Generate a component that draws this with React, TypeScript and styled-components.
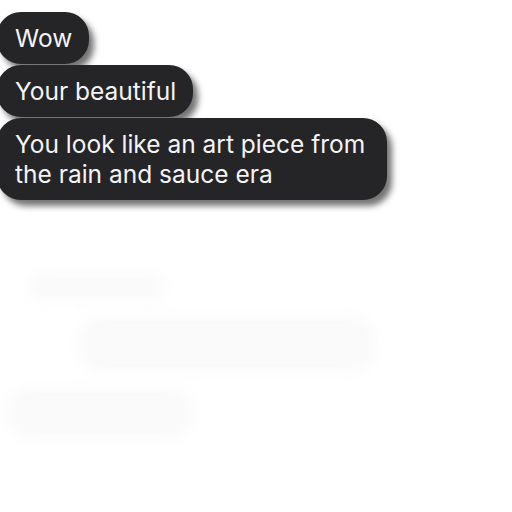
import React from "react";
import styled, { createGlobalStyle } from "styled-components";

const Global = createGlobalStyle`
  html, body { margin: 0; padding: 0; background: #ffffff; }
  body { width: 512px; height: 512px; overflow: hidden; font-family: Inter, "Liberation Sans", sans-serif; }
`;

const Thread = styled.div`
  display: flex;
  flex-direction: column;
  align-items: flex-start;
  gap: 1px;
  padding: 12px 0 0 0;
  margin-left: -3px;
`;

const Bubble = styled.div<{ $pr?: number }>`
  background: #252528;
  color: #f4f4f6;
  font-size: 24.5px;
  line-height: 30px;
  letter-spacing: 0;
  padding: 11px ${(p) => p.$pr ?? 17}px 11px 18px;
  border-radius: 24px;
  box-shadow: 5px 6px 6px rgba(0, 0, 0, 0.55);
  position: relative;
`;

const GhostArea = styled.div`
  display: flex;
  flex-direction: column;
  gap: 18px;
  margin-top: 75px;
  filter: blur(7px);
  opacity: 0.35;
`;

const Ghost = styled.div<{ $w: number; $h: number; $ml: number }>`
  width: ${(p) => p.$w}px;
  height: ${(p) => p.$h}px;
  margin-left: ${(p) => p.$ml}px;
  border-radius: 22px;
  background: #f1f1f3;
  border: 2px solid #e0e0e2;
`;

export default function App() {
  return (
    <>
      <Global />
      <Thread>
        <Bubble>Wow</Bubble>
        <Bubble>Your beautiful</Bubble>
        <Bubble $pr={22}>
          You look like an art piece from
          <br />
          the rain and sauce era
        </Bubble>
      </Thread>
      <GhostArea>
        <Ghost $w={130} $h={20} $ml={30} />
        <Ghost $w={290} $h={50} $ml={80} />
        <Ghost $w={180} $h={45} $ml={8} />
      </GhostArea>
    </>
  );
}
